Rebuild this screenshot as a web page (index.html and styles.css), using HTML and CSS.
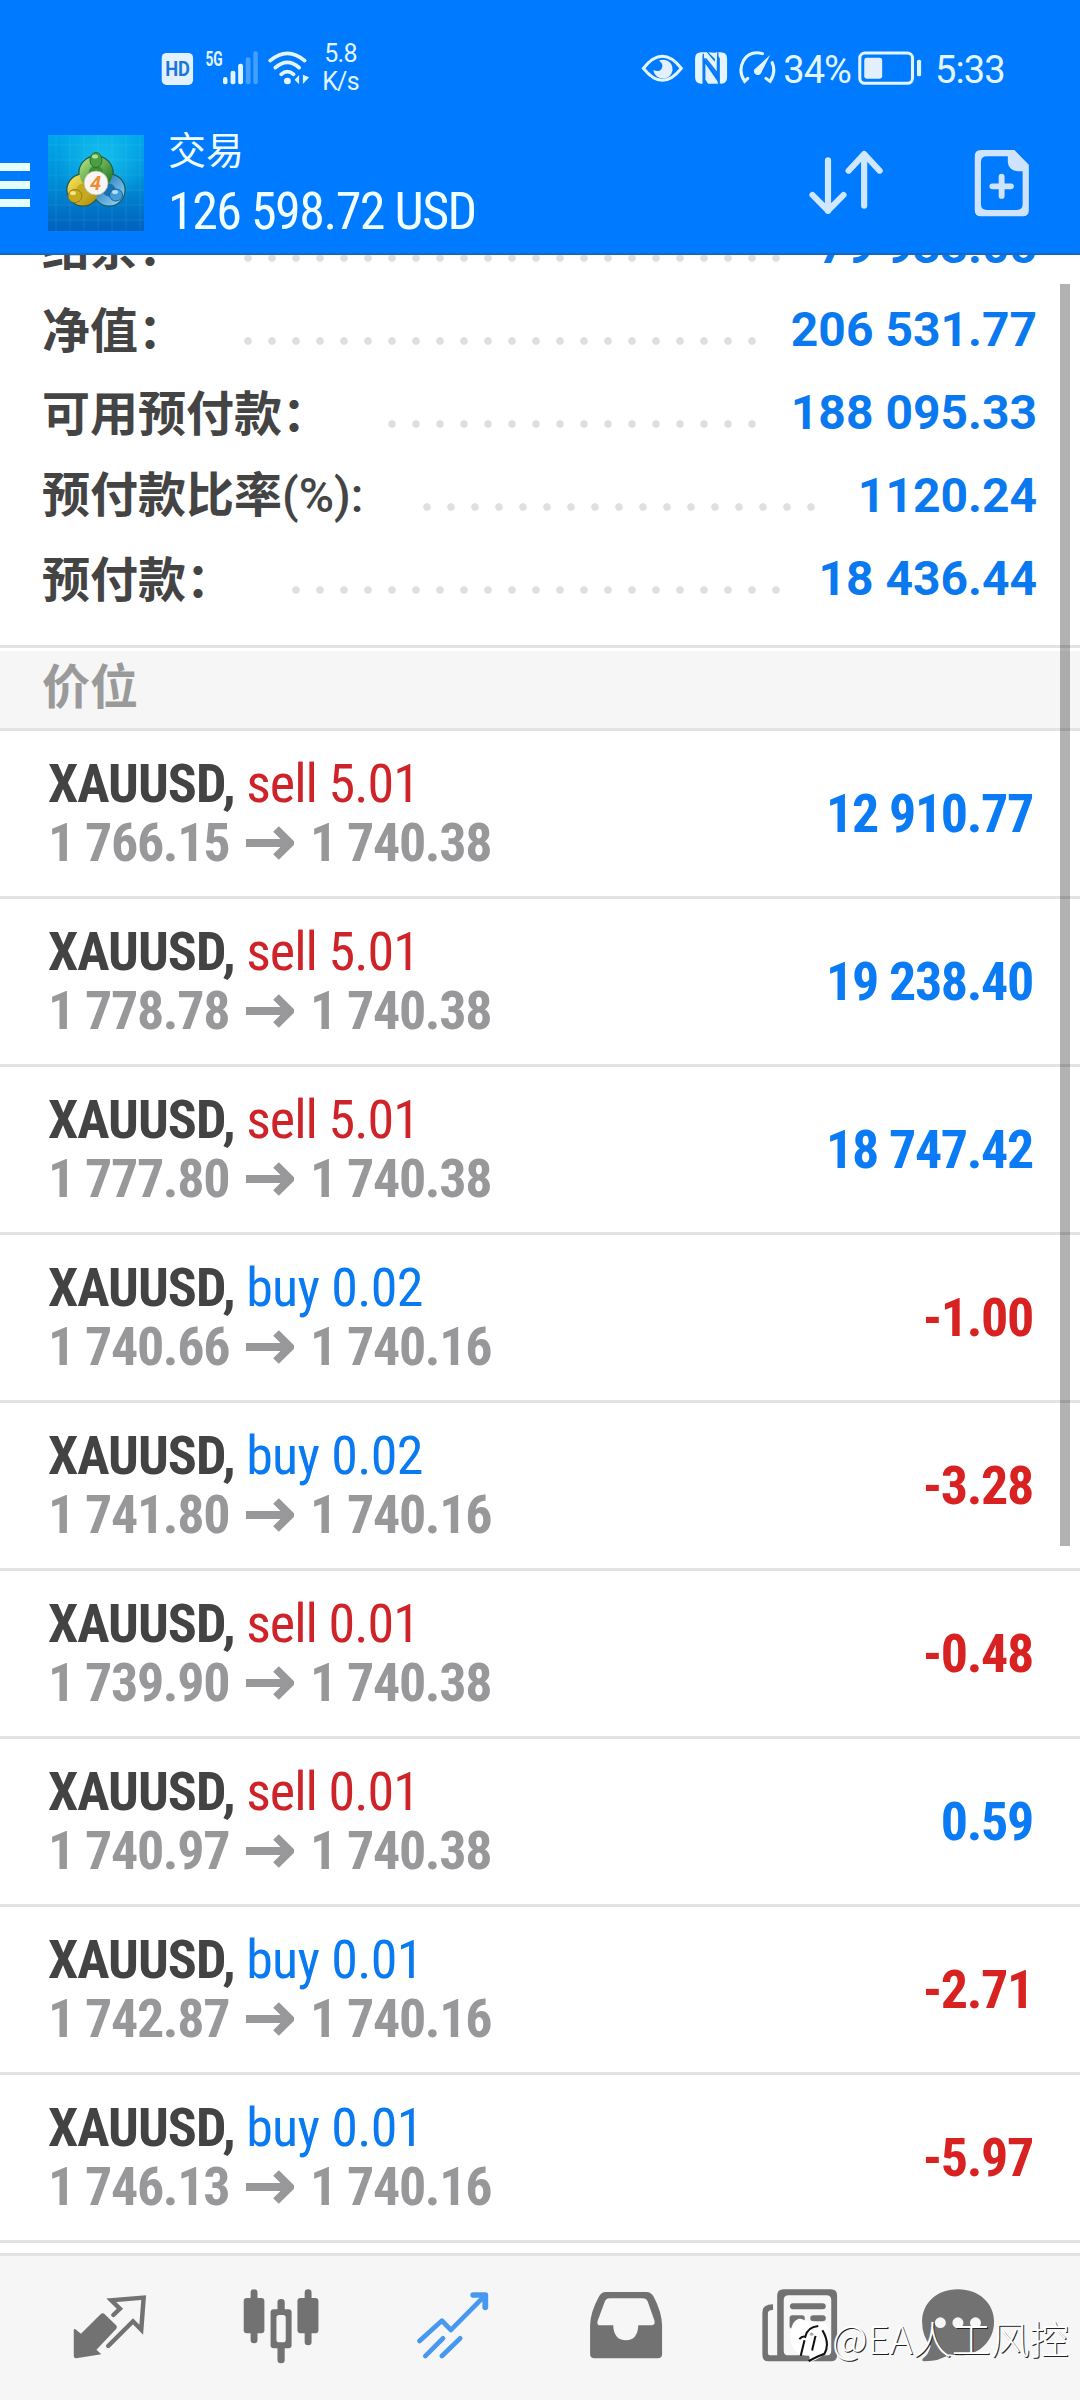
FILE: index.html
```html
<!DOCTYPE html>
<html lang="zh-CN">
<head>
<meta charset="utf-8">
<title>交易</title>
<link rel="stylesheet" href="styles.css">
</head>
<body>
<div class="phone">
  <header class="top">
    <div class="status">
      <svg class="net" viewBox="465 140 440 130" preserveAspectRatio="none">
        <rect x="470" y="158" width="91" height="96" rx="14" fill="#e3f1ff"/>
        <text x="480" y="228" font-size="58" font-weight="700" textLength="72" lengthAdjust="spacingAndGlyphs" fill="#1a76dc">HD</text>
        <text x="597" y="197" font-size="60" font-weight="700" textLength="50" lengthAdjust="spacingAndGlyphs" fill="#e3f6ff">5G</text>
        <g fill="#e3f6ff">
          <rect x="648" y="230" width="13" height="22" rx="6"/>
          <rect x="670" y="211" width="14" height="41" rx="6"/>
          <rect x="692" y="190" width="14" height="62" rx="6"/>
          <rect x="714" y="171" width="14" height="81" rx="6" opacity=".3"/>
          <rect x="736" y="153" width="13" height="99" rx="6" opacity=".3"/>
          <circle cx="835" cy="242" r="10"/>
          <path d="M869 224v28l-13-14zM880 223v28l18-20z"/>
        </g>
        <g fill="none" stroke="#e3f6ff" stroke-width="11" stroke-linecap="round">
          <path d="M785 181Q835 137 885 181"/>
          <path d="M800 202Q835 170 869 202"/>
          <path d="M817 222Q835 206 853 222"/>
        </g>
      </svg>
      <div class="speed"><span>5.8</span><span>K/s</span></div>
      <svg class="sys" viewBox="290 145 400 120" preserveAspectRatio="none">
        <path d="M300 206Q355 134 410 206Q355 278 300 206Z" fill="none" stroke="#e3f6ff" stroke-width="9"/>
        <path d="M345 183A28 28 0 1 1 329 211Q352 221 355 200Q356 190 345 183Z" fill="#e3f1ff"/>
        <path d="M468 158H484L507 186L510 158H524Q543 158 543 177V233Q543 252 526 252L522 251V228V176L513 163V225L472 168V252H468Q450 252 450 233V177Q450 158 468 158Z" fill="#e3f6ff"/>
        <path d="M480 180V240L488 252H520L480 192ZM488 158L514 184V160Z" fill="#e3f1ff"/>
        <path d="M480 176L518 230V252M474 162V252M516 158V222L482 178" fill="none" stroke="#1279f2" stroke-width="4"/>
        <g fill="none" stroke="#e3f6ff" stroke-width="9" stroke-linecap="round">
          <path d="M646 162Q610 152 591 182Q574 215 594 245L603 236"/>
          <path d="M674 189Q686 218 668 245L656 236"/>
        </g>
        <path d="M668 166L642 220A11 11 0 1 1 623 209Z" fill="#e3f6ff"/>
      </svg>
      <span class="stext pct">34%</span>
      <svg class="batt" viewBox="920 145 200 120" preserveAspectRatio="none">
        <rect x="931" y="160" width="153" height="91" rx="15" fill="none" stroke="#e3f6ff" stroke-width="9"/>
        <rect x="944" y="174" width="52" height="63" rx="7" fill="#e3f1ff"/>
        <rect x="1097" y="180" width="12" height="50" rx="5" fill="#e3f6ff"/>
      </svg>
      <span class="stext time">5:33</span>
    </div>
    <div class="bar">
      <div class="burger"><i></i><i></i><i></i></div>
      <svg class="logo" viewBox="0 0 96 96">
        <defs>
          <linearGradient id="sky" x1="0" y1="0" x2="0" y2="1"><stop offset="0" stop-color="#00a6ea"/><stop offset=".45" stop-color="#0091d8"/><stop offset="1" stop-color="#0060bd"/></linearGradient>
          <radialGradient id="glow"><stop offset="0" stop-color="#1cc8ee" stop-opacity=".8"/><stop offset="1" stop-color="#1cc8ee" stop-opacity="0"/></radialGradient>
          <linearGradient id="gr" x1="0" y1="0" x2="1" y2="1"><stop offset="0" stop-color="#a2d878"/><stop offset="1" stop-color="#237a26"/></linearGradient>
          <linearGradient id="ye" x1="0" y1="0" x2="1" y2="1"><stop offset="0" stop-color="#f2dc50"/><stop offset="1" stop-color="#b29410"/></linearGradient>
          <linearGradient id="bl" x1="0" y1="0" x2="1" y2="1"><stop offset="0" stop-color="#1a75b8"/><stop offset="1" stop-color="#8accf2"/></linearGradient>
        </defs>
        <rect width="96" height="96" fill="url(#sky)"/>
        <circle cx="54" cy="24" r="46" fill="url(#glow)"/>
        <path d="M8 0V96M22 0V96M36 0V96M50 0V96M64 0V96M78 0V96M92 0V96M0 10H96M0 25H96M0 40H96M0 55H96M0 70H96M0 85H96" stroke="#8fe0ff" stroke-opacity=".12" fill="none"/>
        <g fill="none" stroke="#1b5a50" stroke-width="11.5">
          <circle cx="48" cy="38" r="12"/><circle cx="35" cy="55" r="11"/><circle cx="61" cy="55" r="11"/>
        </g>
        <circle cx="61" cy="55" r="11" fill="#1873b5" stroke="url(#bl)" stroke-width="9"/>
        <circle cx="35" cy="55" r="11" fill="#c6aa1e" stroke="url(#ye)" stroke-width="9"/>
        <circle cx="48" cy="38" r="12" fill="#399236" stroke="url(#gr)" stroke-width="9"/>
        <ellipse cx="48" cy="25" rx="6" ry="7.500" fill="#4d9d42" stroke="#28702d"/>
        <ellipse cx="27" cy="61" rx="7" ry="6.500" fill="#c7a920" stroke="#937a14"/>
        <ellipse cx="68" cy="60" rx="6.500" ry="6" fill="#469cd4" stroke="#155e9d"/>
        <ellipse cx="47" cy="21.500" rx="3" ry="2" fill="#b4e19a"/><ellipse cx="25" cy="58" rx="3" ry="2" fill="#f5e68a"/><ellipse cx="67" cy="57" rx="3" ry="2" fill="#b4ddf6"/>
        <circle cx="48" cy="48" r="12" fill="#f8f6f2" stroke="#b9b49e" stroke-width=".8"/>
        <text x="42" y="55" font-size="20" font-style="italic" font-weight="700" fill="#ef8a35">4</text>
      </svg>
      <div class="title"><span class="name">交易</span><span class="sum">126 598.72 USD</span></div>
      <svg class="sort" viewBox="775 440 230 215" preserveAspectRatio="none">
        <path d="M836 480V632M791 584L836 631L881 584M941 616V462M896 511L941 461L986 511" fill="none" stroke="#cfe7ff" stroke-width="18" stroke-linecap="round" stroke-linejoin="round"/>
      </svg>
      <svg class="doc" viewBox="1255 440 175 215" preserveAspectRatio="none">
        <path fill-rule="evenodd" d="M1281 449H1378L1420 493V630Q1420 648 1402 648H1281Q1263 648 1263 630V467Q1263 449 1281 449ZM1298 468Q1281 468 1281 485V612Q1281 629 1298 629H1385Q1402 629 1402 612V513H1387Q1359 508 1359 485V468Z" fill="#cfe4fc"/>
        <path d="M1341 529V587M1314 558H1368" stroke="#cfe4fc" stroke-width="17" stroke-linecap="round"/>
      </svg>
    </div>
  </header>

  <section class="summary">
    <div class="srow"><span class="lab" style="width:202px">结余：</span><i class="dots" style="width:552px"></i><b>79 933.05</b></div>
    <div class="srow"><span class="lab" style="width:202px">净值：</span><i class="dots" style="width:528px"></i><b>206 531.77</b></div>
    <div class="srow"><span class="lab" style="width:346px">可用预付款：</span><i class="dots" style="width:384px"></i><b>188 095.33</b></div>
    <div class="srow"><span class="lab" style="width:381px">预付款比率<span class="lat">(%):</span></span><i class="dots" style="width:408px"></i><b>1120.24</b></div>
    <div class="srow"><span class="lab" style="width:250px">预付款：</span><i class="dots" style="width:504px"></i><b>18 436.44</b></div>
  </section>
  <h2 class="section">价位</h2>
  <main class="list">
    <article class="pos"><div><p class="sym"><b>XAUUSD,</b> <span class="sell">sell 5.01</span></p><p class="px"><span>1 766.15</span><svg viewBox="0 0 48 34"><path d="M0 17H42M30 3L44 17L30 31"/></svg><span>1 740.38</span></p></div><strong class="up">12 910.77</strong></article>
    <article class="pos"><div><p class="sym"><b>XAUUSD,</b> <span class="sell">sell 5.01</span></p><p class="px"><span>1 778.78</span><svg viewBox="0 0 48 34"><path d="M0 17H42M30 3L44 17L30 31"/></svg><span>1 740.38</span></p></div><strong class="up">19 238.40</strong></article>
    <article class="pos"><div><p class="sym"><b>XAUUSD,</b> <span class="sell">sell 5.01</span></p><p class="px"><span>1 777.80</span><svg viewBox="0 0 48 34"><path d="M0 17H42M30 3L44 17L30 31"/></svg><span>1 740.38</span></p></div><strong class="up">18 747.42</strong></article>
    <article class="pos"><div><p class="sym"><b>XAUUSD,</b> <span class="buy">buy 0.02</span></p><p class="px"><span>1 740.66</span><svg viewBox="0 0 48 34"><path d="M0 17H42M30 3L44 17L30 31"/></svg><span>1 740.16</span></p></div><strong class="down">-1.00</strong></article>
    <article class="pos"><div><p class="sym"><b>XAUUSD,</b> <span class="buy">buy 0.02</span></p><p class="px"><span>1 741.80</span><svg viewBox="0 0 48 34"><path d="M0 17H42M30 3L44 17L30 31"/></svg><span>1 740.16</span></p></div><strong class="down">-3.28</strong></article>
    <article class="pos"><div><p class="sym"><b>XAUUSD,</b> <span class="sell">sell 0.01</span></p><p class="px"><span>1 739.90</span><svg viewBox="0 0 48 34"><path d="M0 17H42M30 3L44 17L30 31"/></svg><span>1 740.38</span></p></div><strong class="down">-0.48</strong></article>
    <article class="pos"><div><p class="sym"><b>XAUUSD,</b> <span class="sell">sell 0.01</span></p><p class="px"><span>1 740.97</span><svg viewBox="0 0 48 34"><path d="M0 17H42M30 3L44 17L30 31"/></svg><span>1 740.38</span></p></div><strong class="up">0.59</strong></article>
    <article class="pos"><div><p class="sym"><b>XAUUSD,</b> <span class="buy">buy 0.01</span></p><p class="px"><span>1 742.87</span><svg viewBox="0 0 48 34"><path d="M0 17H42M30 3L44 17L30 31"/></svg><span>1 740.16</span></p></div><strong class="down">-2.71</strong></article>
    <article class="pos"><div><p class="sym"><b>XAUUSD,</b> <span class="buy">buy 0.01</span></p><p class="px"><span>1 746.13</span><svg viewBox="0 0 48 34"><path d="M0 17H42M30 3L44 17L30 31"/></svg><span>1 740.16</span></p></div><strong class="down">-5.97</strong></article>
  </main>
  <nav class="tabs">
    <svg viewBox="207 170 226.500 234" preserveAspectRatio="none"><path d="M293 252Q299 246 305 252L338 285Q343 290 338 296L281 358L295 372L222 384Q215 384 215 377V297L219 296L236 310Z" fill="#727272"/><path d="M330 254L349 235L324 210L418 202L411 298L387 273L315 347" fill="none" stroke="#727272" stroke-width="13" stroke-linecap="round" stroke-linejoin="miter"/></svg>
    <svg viewBox="704 170 226.500 234" preserveAspectRatio="none"><g fill="#727272"><rect x="709" y="203" width="60" height="106" rx="9"/><rect x="729" y="177" width="20" height="162" rx="10"/><rect x="865" y="203" width="61" height="106" rx="9"/><rect x="886" y="177" width="20" height="168" rx="10"/><rect x="807" y="206" width="21" height="193" rx="10"/><rect x="787" y="237" width="61" height="117" rx="9"/></g><rect x="804" y="254" width="27" height="82" rx="8" fill="#f6f6f6"/></svg>
    <svg viewBox="1204 170 226.500 234" preserveAspectRatio="none"><g fill="none" stroke="#4698f0" stroke-linecap="round" stroke-linejoin="round"><path d="M1220 332L1285 271L1311 299L1410 196M1237 377L1288 324M1285 377L1338 324" stroke-width="14"/><path d="M1376 194H1411V231" stroke-width="17"/></g></svg>
    <svg viewBox="138 170 226.500 234" preserveAspectRatio="none"><path fill-rule="evenodd" d="M192 185H310Q324 185 332 200Q355 245 356 285V371Q356 384 343 384H160Q147 384 147 371V285Q148 245 172 200Q180 185 192 185ZM203 204Q194 204 190 213L169 271Q165 285 177 285H214Q216 330 251 330Q285 330 287 285H325Q337 284 334 271L314 213Q310 204 300 204Z" fill="#727272"/></svg>
    <svg viewBox="642 170 226.500 234" preserveAspectRatio="none"><path fill-rule="evenodd" d="M708 177H845Q863 177 863 195V375Q863 393 845 393H664Q646 393 646 373V245Q646 222 677 222V239Q662 238 662 250V367Q662 375 670 375H689V195Q689 177 708 177ZM722 195Q708 195 708 209V361Q708 375 722 375H832Q846 375 846 361V209Q846 195 832 195Z" fill="#727272"/><g fill="#727272"><rect x="726" y="219" width="104" height="18" rx="9"/><rect x="725" y="255" width="44" height="40" rx="8"/><rect x="785" y="255" width="45" height="18" rx="9"/></g></svg>
    <svg viewBox="1100 170 226.500 234" preserveAspectRatio="none"><path d="M1213 177C1275 177 1318 220 1318 274C1318 330 1275 375 1220 375Q1200 375 1188 372Q1160 393 1116 393Q1105 393 1112 384Q1127 374 1134 347Q1109 318 1109 274C1109 220 1150 177 1213 177Z" fill="#727272"/><g fill="#f6f6f6"><circle cx="1162" cy="277" r="16"/><circle cx="1213" cy="277" r="16"/><circle cx="1264" cy="277" r="16"/></g></svg>
  </nav>
  <div class="scrollbar"></div>
  <div class="mark">
    <svg viewBox="720 262 125 145" preserveAspectRatio="none"><path d="M735 284Q750 262 768 275L830 284Q842 300 836 360Q822 390 784 400L782 382Q742 382 730 348Q722 310 735 284Z" fill="#fff"/><path d="M753 332Q762 322 770 325Q776 295 808 292M768 335L757 382M800 322L790 366M820 305Q843 345 826 376Q810 382 780 398" fill="none" stroke="#111" stroke-width="6"/><circle cx="789" cy="317" r="5" fill="#aaa"/></svg>
    <span>@EA人工风控</span>
  </div>
</div>
</body>
</html>
```
FILE: styles.css
```css
* { box-sizing: border-box; }
body { margin: 0; background: #fff; font-family: Roboto, "Noto Sans CJK SC", sans-serif; }
p, h2 { margin: 0; }
svg { display: block; flex: none; }
.phone { position: relative; width: 1080px; height: 2400px; overflow: hidden; display: flex; flex-direction: column; background: #fff; }

.top { height: 255px; flex: none; background: #007aff; border-bottom: 2px solid #1768bd; }
.status { height: 135px; display: flex; padding-left: 160px; color: #e3f6ff; }
.net { width: 151.5px; height: 43.3px; margin-top: 46.7px; }
.speed { display: flex; flex-direction: column; align-items: center; width: 36px; margin: 40px 256.500px 0 11px; font-size: 25px; line-height: 28px; letter-spacing: -.8px; text-align: center; }
.speed span { width: 60px; flex: none; }
.sys { width: 137.700px; height: 40px; margin-top: 48.300px; margin-left: 24.500px; }
.stext { font-size: 38px; line-height: 44px; margin-top: 48px; white-space: nowrap; flex: none; letter-spacing: -.9px; }
.pct { width: 73px; margin-left: 6px; }
.batt { width: 68.900px; height: 40px; margin-top: 48.300px; }
.time { margin-left: 10px; }

.bar { height: 118px; display: flex; }
.burger { width: 48px; padding-top: 28px; display: flex; flex-direction: column; gap: 10px; }
.burger i { width: 30px; height: 8px; background: #e6ffff; }
.logo { width: 96px; height: 96px; }
.title { display: flex; flex-direction: column; margin-left: 24px; width: 639px; color: #f2ffff; white-space: nowrap; }
.name { font-size: 38px; line-height: 42px; margin-top: -5px; }
.sum { font-size: 52px; line-height: 60px; margin-top: 10px; letter-spacing: -1.500px; font-stretch: 75%; font-family: "Roboto Condensed", Roboto, sans-serif; }
.sort { width: 79.200px; height: 71.700px; margin-top: 11.700px; }
.doc { width: 60.300px; height: 71.700px; margin: 11.700px 0 0 86px; }

.summary { height: 390px; flex: none; overflow: hidden; padding: 0 44px 0 34px; }
.srow { height: 83px; display: flex; align-items: center; }
.srow:first-child { margin-top: -50px; }
.lab { flex: none; padding-left: 8px; margin-top: -5px; font-size: 48px; line-height: 78px; font-weight: 700; color: #444; white-space: nowrap; font-family: "Noto Sans CJK SC", sans-serif; }
.lat { font-family: Roboto, sans-serif; font-weight: 500; }
.dots { flex: none; height: 8px; margin-top: 23px; background: radial-gradient(circle, #dfdfdf 3.400px, transparent 4.200px) 0 0 / 24px 8px repeat-x; }
.srow b { margin-left: auto; font-size: 48px; font-weight: 700; color: #0a78ee; white-space: nowrap; margin-right: -1px; }

.section { height: 86px; flex: none; padding: 2px 0 0 42px; border-top: 3px solid #e3e3e3; border-bottom: 3px solid #e3e3e3; background: linear-gradient(#fff 3px, #f6f6f6 3px); font: 700 48px/66px "Noto Sans CJK SC", sans-serif; color: #9a9a9a; }

.list { flex: none; height: 1522px; font-family: "Roboto Condensed", Roboto, sans-serif; font-stretch: 75%; font-size: 54px; }
.pos { height: 168px; border-bottom: 3px solid #e3e3e3; padding: 23px 47px 0 48px; display: flex; justify-content: space-between; white-space: nowrap; }
.sym, .px { line-height: 59px; height: 59px; }
.sym { color: #434343; letter-spacing: -.950px; }
.px { display: flex; align-items: center; color: #98989b; font-weight: 700; letter-spacing: -1.350px; }
.px span { width: 182px; }
.px svg { width: 48px; height: 34px; margin: 0 16px 0 16px; fill: none; stroke: #98989b; stroke-width: 8; }
.pos strong { line-height: 60px; margin-top: 30px; letter-spacing: -1.350px; }
.sell { color: #cf232a; }
.buy { color: #0a7af0; letter-spacing: -.650px; }
.up { color: #0a7af5; }
.down { color: #d82222; }

.tabs { flex: none; height: 147px; border-top: 3px solid #e3e3e3; background: #f6f6f6; padding: 31px 0 0 71.200px; display: grid; grid-template-columns: 171.100px 172.200px 172.900px 173.600px 157.700px 78px; }
.tabs svg { width: 78px; height: 78px; }

.scrollbar { position: absolute; left: 1060px; top: 284px; width: 10px; height: 1262px; background: rgba(0, 0, 0, .3); }
.mark { position: absolute; left: 788px; top: 2316px; display: flex; align-items: center; color: #fff; font: 300 39px/48px "Noto Sans CJK SC", sans-serif; text-shadow: 1px 1px 0 #222; white-space: nowrap; }
.mark svg { width: 43px; height: 48px; }
.mark span { margin: -6px 0 0 1px; }
```
